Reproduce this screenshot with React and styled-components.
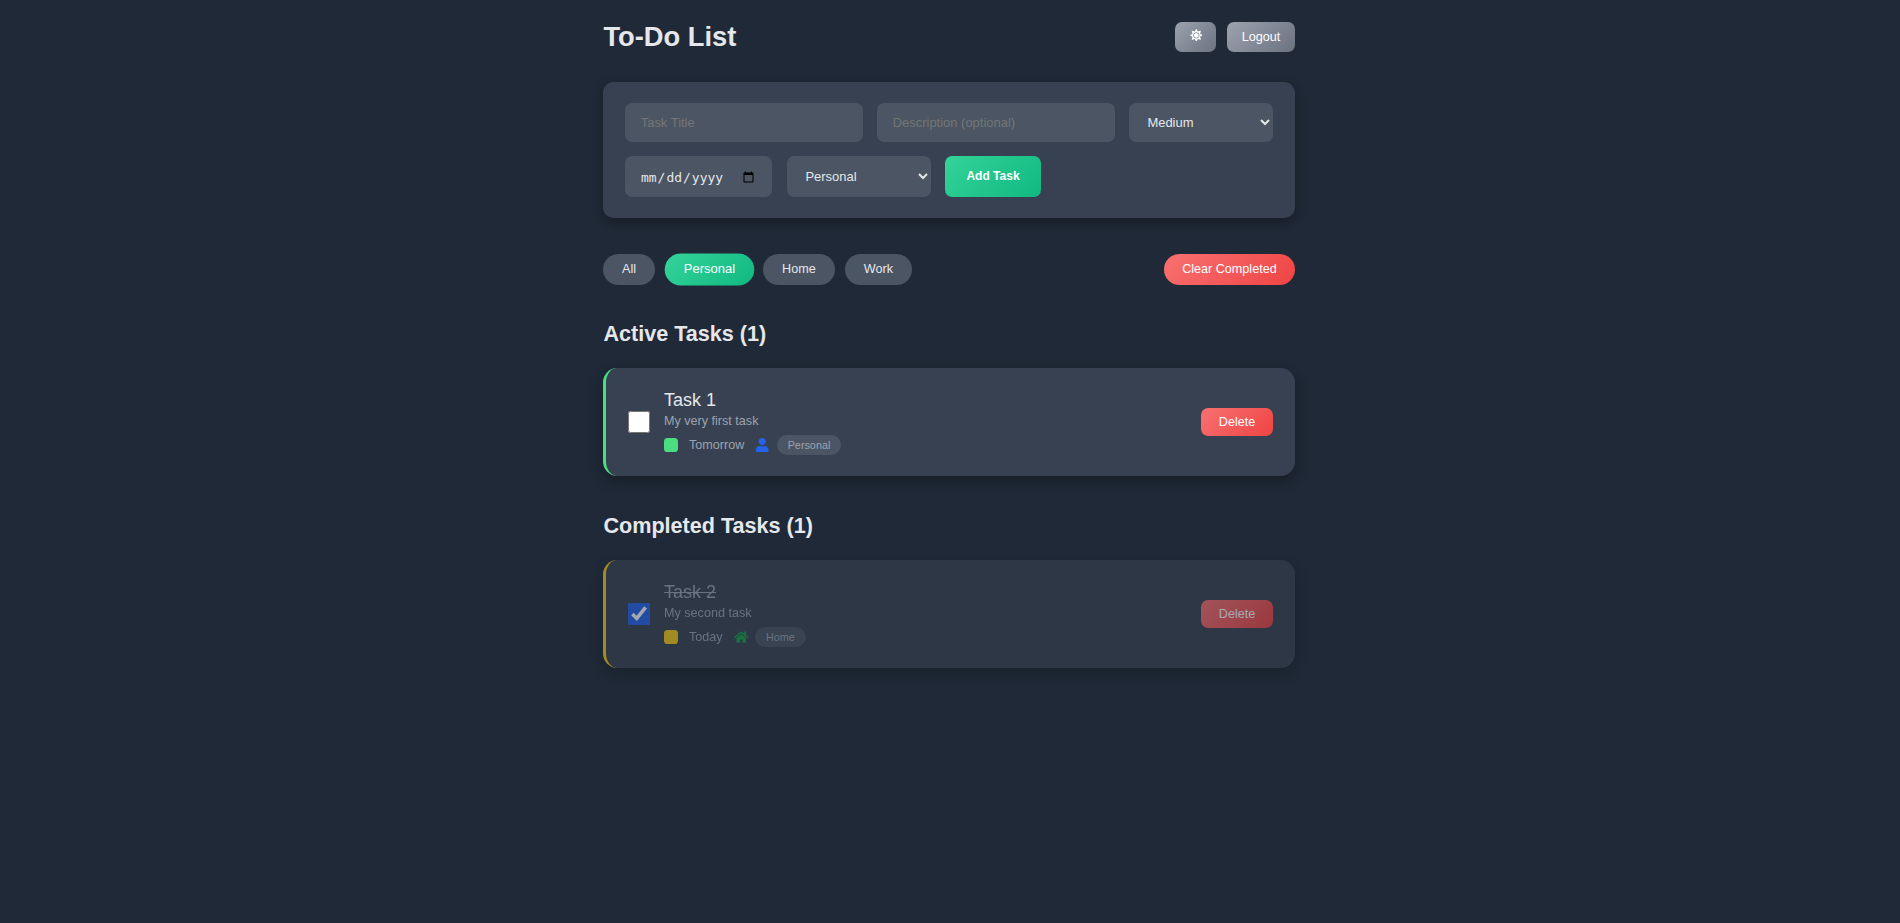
import React from 'react';
import styled, { createGlobalStyle, css } from 'styled-components';
import { FaSun, FaUser, FaHome } from 'react-icons/fa';

const GlobalStyle = createGlobalStyle`
  *, *::before, *::after { box-sizing: border-box; }
  body {
    margin: 0;
    min-height: 100vh;
    background: #1f2937;
    color: #e5e7eb;
    font-family: "Liberation Sans", Arial, sans-serif;
    font-size: 14.4px;
  }
  button, input, select { font-family: inherit; margin: 0; }
  h1, h2, p { margin: 0; }
`;

const Page = styled.main`
  width: 692px;
  margin: 0 auto;
  padding-top: 22px;
  position: relative;
  left: -0.6px;
`;

const Header = styled.header`
  display: flex;
  justify-content: space-between;
  align-items: center;
  height: 30px;
  margin-bottom: 30px;
`;

const Title = styled.h1`
  font-size: 27.3px;
  line-height: 30px;
`;

const HeaderActions = styled.div`
  display: flex;
  gap: 11px;
`;

const GrayButton = styled.button`
  width: ${(p) => p.$width}px;
  height: 30px;
  padding: 0 0.8px 0 0;
  border: 0;
  border-radius: 7px;
  background: linear-gradient(135deg, #9ca3af, #6b7280);
  color: #fff;
  font-size: 12.6px;
`;

const ThemeButton = styled(GrayButton)`
  padding: 0 0 0 0.2px;
  svg { display: block; margin: -4px auto 0; }
`;

const FormCard = styled.form`
  display: flex;
  flex-wrap: wrap;
  gap: 14px;
  height: 136px;
  padding: 21px 22px;
  margin-bottom: 36px;
  border-radius: 10.8px;
  background: #374151;
  box-shadow: 0 4px 11px rgba(0, 0, 0, 0.3);
`;

const field = css`
  border: 0;
  border-radius: 7.2px;
  background: #4b5563;
  color: #e5e7eb;
  font-size: 12.96px;
`;

const TextInput = styled.input`
  ${field}
  width: 238px;
  height: 39px;
  padding: 0 15.3px;
`;

const DateInput = styled.input`
  ${field}
  width: 147px;
  height: 41px;
  padding: 1px 15.3px 0 14.6px;
  margin-right: 1px;
  font-family: monospace;
`;

const Select = styled.select`
  ${field}
  width: 144px;
  height: ${(p) => p.$height}px;
  padding: 0 0 0 14px;
`;

const AddButton = styled.button`
  width: 96px;
  height: 41px;
  padding: 0 0.8px 2px 0;
  border: 0;
  border-radius: 7.2px;
  background: linear-gradient(135deg, #34d399, #10b981);
  color: #fff;
  font-size: 12px;
  font-weight: 700;
`;

const FilterBar = styled.nav`
  display: flex;
  justify-content: space-between;
  height: 31px;
  margin-bottom: 36px;
`;

const FilterGroup = styled.div`
  display: flex;
  gap: 10.7px;
`;

const Pill = styled.button`
  height: 31px;
  padding: 0 18.9px 1px 18.6px;
  border: 0;
  border-radius: 16px;
  background: #4b5563;
  color: #e5e7eb;
  font-size: 12.6px;
  ${(p) => p.$active && css`
    background: linear-gradient(135deg, #34d399, #10b981);
    color: #fff;
    transform: scale(1.03);
  `}
`;

const ClearButton = styled(Pill)`
  width: 131px;
  padding: 0 1px 1px 0;
  background: linear-gradient(135deg, #f87171, #ef4444);
  color: #fff;
`;

const Section = styled.section`
  margin-bottom: 37px;
`;

const SectionTitle = styled.h2`
  height: 26px;
  margin-bottom: 21px;
  font-size: 21.6px;
  line-height: 26px;
`;

const TaskCard = styled.article`
  display: flex;
  align-items: center;
  height: 108px;
  padding: 0 22px;
  border-left: 3px solid ${(p) => p.$accent};
  border-radius: 14.4px;
  background: #374151;
  box-shadow: 0 5px 14px rgba(0, 0, 0, 0.3);
  opacity: ${(p) => (p.$done ? 0.6 : 1)};
`;

const Checkbox = styled.input`
  width: 22px;
  height: 22px;
  margin-right: 13.6px;
  accent-color: #2563eb;
`;

const TaskBody = styled.div`
  flex: 1;
`;

const TaskTitle = styled.p`
  font-size: 18px;
  line-height: 22px;
  text-decoration: ${(p) => (p.$done ? 'line-through' : 'none')};
  color: ${(p) => (p.$done ? '#9ca3af' : '#e5e7eb')};
`;

const TaskNote = styled.p`
  color: #9ca3af;
  font-size: 12.6px;
  line-height: 20px;
`;

const TaskMeta = styled.div`
  display: flex;
  align-items: center;
  height: 20px;
  margin-top: 4px;
  color: #9ca3af;
  font-size: 12.6px;
`;

const Priority = styled.span`
  width: 14px;
  height: 14px;
  margin-right: 11px;
  border-radius: 3.6px;
  background: ${(p) => p.$color};
`;

const CategoryIcon = styled.span`
  display: flex;
  margin: 0 7.2px 0 11px;
  color: ${(p) => p.$color};
`;

const Badge = styled.span`
  height: 20px;
  padding: 0 10.8px;
  border-radius: 10px;
  background: #4b5563;
  font-size: 10.8px;
  line-height: 20px;
`;

const DeleteButton = styled.button`
  width: 72px;
  height: 28px;
  padding: 0 0.8px 1px 0;
  border: 0;
  border-radius: 7.2px;
  background: linear-gradient(135deg, #f87171, #ef4444);
  color: #fff;
  font-size: 12.6px;
`;

function Task({ title, note, due, color, icon, iconColor, category, done }) {
  return (
    <TaskCard $accent={color} $done={done}>
      <Checkbox type="checkbox" defaultChecked={done} />
      <TaskBody>
        <TaskTitle $done={done}>{title}</TaskTitle>
        <TaskNote>{note}</TaskNote>
        <TaskMeta>
          <Priority $color={color} />
          {due}
          <CategoryIcon $color={iconColor}>{icon}</CategoryIcon>
          <Badge>{category}</Badge>
        </TaskMeta>
      </TaskBody>
      <DeleteButton>Delete</DeleteButton>
    </TaskCard>
  );
}

export default function App() {
  return (
    <>
      <GlobalStyle />
      <Page>
        <Header>
          <Title>To-Do List</Title>
          <HeaderActions>
            <ThemeButton $width={41} aria-label="Toggle theme"><FaSun size={12.6} /></ThemeButton>
            <GrayButton $width={68}>Logout</GrayButton>
          </HeaderActions>
        </Header>
        <FormCard onSubmit={(e) => e.preventDefault()}>
          <TextInput placeholder="Task Title" />
          <TextInput placeholder="Description (optional)" />
          <Select $height={39} defaultValue="Medium">
            <option>Low</option>
            <option>Medium</option>
            <option>High</option>
          </Select>
          <DateInput type="date" />
          <Select $height={41} defaultValue="Personal">
            <option>Personal</option>
            <option>Home</option>
            <option>Work</option>
          </Select>
          <AddButton>Add Task</AddButton>
        </FormCard>
        <FilterBar>
          <FilterGroup>
            <Pill>All</Pill>
            <Pill $active>Personal</Pill>
            <Pill>Home</Pill>
            <Pill>Work</Pill>
          </FilterGroup>
          <ClearButton>Clear Completed</ClearButton>
        </FilterBar>
        <Section>
          <SectionTitle>Active Tasks (1)</SectionTitle>
          <Task title="Task 1" note="My very first task" due="Tomorrow" color="#4ade80"
            icon={<FaUser size={14.4} />} iconColor="#2563eb" category="Personal" />
        </Section>
        <Section>
          <SectionTitle>Completed Tasks (1)</SectionTitle>
          <Task done title="Task 2" note="My second task" due="Today" color="#facc15"
            icon={<FaHome size={14.4} />} iconColor="#16a34a" category="Home" />
        </Section>
      </Page>
    </>
  );
}
